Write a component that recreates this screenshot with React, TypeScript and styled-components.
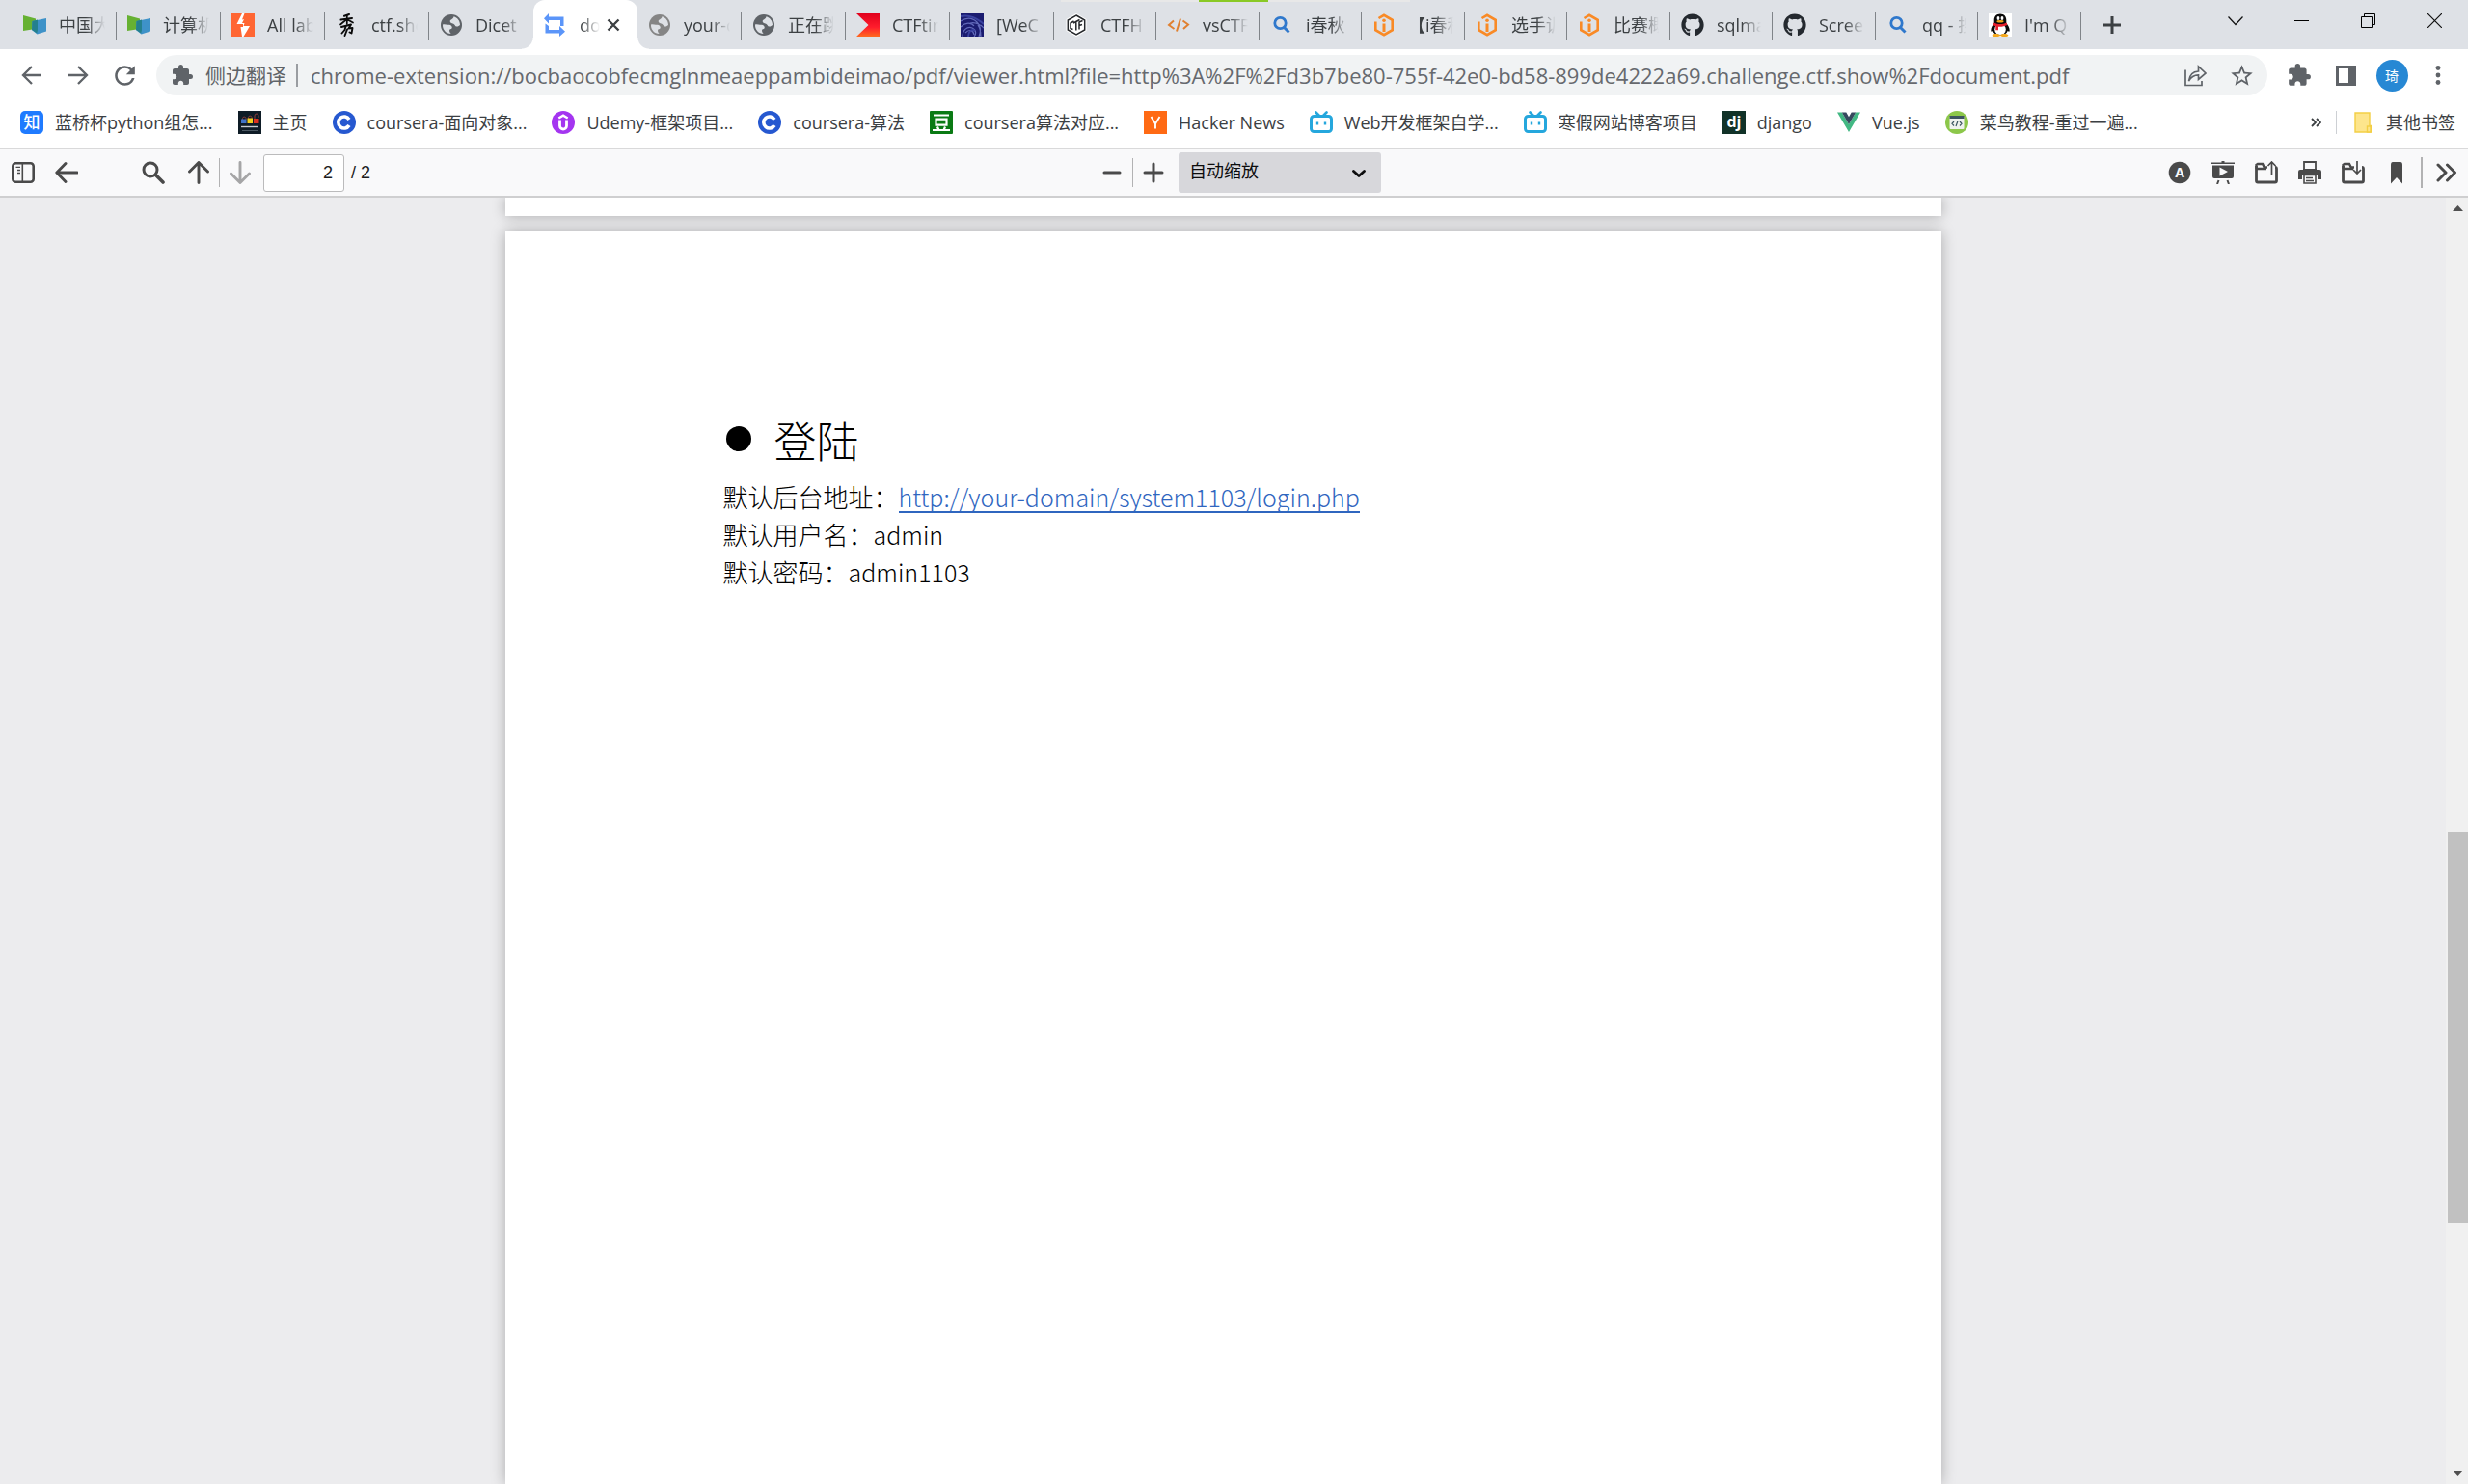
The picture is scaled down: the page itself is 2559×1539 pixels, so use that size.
import React from 'react';
import styled, { createGlobalStyle } from 'styled-components';
import { FaGithub } from 'react-icons/fa';
import { MdExtension, MdRefresh, MdStarBorder } from 'react-icons/md';

const color = {
  strip: '#dee1e6',
  field: '#f1f3f4',
  ink: '#3c4043',
  icon: '#5f6368',
  tool: '#4a4a4a',
  rule: '#9a9da1',
};

const uiFont = '"Open Sans", "Noto Sans CJK SC", sans-serif';
const docFont = '"Noto Sans CJK SC", sans-serif';

const GlobalStyle = createGlobalStyle`
  *, *::before, *::after { box-sizing: border-box; }
  body { margin: 0; background: #fff; font-family: ${uiFont}; color: ${color.ink}; }
  button, input, select { font: inherit; color: inherit; margin: 0; padding: 0; border: 0; background: none; }
  a { color: inherit; text-decoration: none; }
  svg { display: block; flex: none; }
`;

const Window = styled.div`
  display: flex;
  flex-direction: column;
  height: 100vh;
  overflow: hidden;
`;

/* ---------- tab strip ---------- */

const TabStrip = styled.header`
  position: relative;
  display: flex;
  height: 51px;
  flex: none;
  padding-left: 13px;
  background: ${color.strip};
`;

const TabList = styled.div`
  display: grid;
  grid-template-columns: repeat(10, 108px) repeat(5, 106px 107px);
`;

const TabButton = styled.div<{ $active?: boolean; $divider?: boolean }>`
  position: relative;
  display: flex;
  align-items: center;
  gap: 13px;
  padding: 0 12px 0 11px;
  min-width: 0;
  font-size: 18px;
  line-height: 24px;
  border-radius: 12px 12px 0 0;
  background: ${p => (p.$active ? '#fff' : 'transparent')};

  &::after {
    content: '';
    display: ${p => (p.$divider ? 'block' : 'none')};
    position: absolute;
    right: 0;
    top: 12px;
    width: 1px;
    height: 30px;
    background: #808489;
  }
`;

const Flare = styled.span<{ $side: 'left' | 'right' }>`
  position: absolute;
  bottom: 0;
  ${p => p.$side}: -12px;
  width: 12px;
  height: 12px;
  background: radial-gradient(
    circle at ${p => (p.$side === 'left' ? '0 0' : '100% 0')},
    transparent 11px,
    #fff 12px
  );
`;

const TabTitle = styled.button`
  flex: 1;
  min-width: 0;
  overflow: hidden;
  white-space: nowrap;
  text-align: left;
  mask-image: linear-gradient(to right, #000 calc(100% - 20px), transparent);
`;

const CloseButton = styled.button`
  display: flex;
  margin-right: 6px;
  margin-left: -6px;
`;

const NewTab = styled.button`
  display: grid;
  place-items: center;
  width: 64px;
  height: 51px;
`;

const WindowControls = styled.div`
  display: flex;
  margin-left: auto;
`;

const WindowButton = styled.button`
  display: grid;
  place-items: center;
  width: 69px;
  height: 43px;
`;

const TopHint = styled.div`
  position: absolute;
  top: 0;
  left: 43%;
  display: flex;
  justify-content: center;
  width: 362px;
  height: 2px;
  background: #e8e8e8;
`;

const TopHintMark = styled.span`
  width: 72px;
  margin-right: 4px;
  background: #8ac926;
`;

/* ---------- navigation ---------- */

const NavRow = styled.nav`
  display: flex;
  align-items: center;
  height: 54px;
  flex: none;
  padding: 0 7px 0 9px;
  color: ${color.icon};
`;

const NavButton = styled.button`
  display: grid;
  place-items: center;
  width: 48px;
  height: 42px;
`;

const AddressBar = styled.div`
  display: flex;
  align-items: center;
  flex: 1;
  height: 42px;
  margin: 0 9px;
  padding: 0 3px 0 15px;
  border-radius: 21px;
  background: ${color.field};
`;

const SiteLabel = styled.label`
  margin-left: 12px;
  padding-right: 10px;
  border-right: 2px solid ${color.rule};
  font-size: 21px;
  line-height: 24px;
`;

const AddressInput = styled.input`
  flex: 1;
  min-width: 0;
  height: 36px;
  padding-left: 13px;
  font-size: 22px;
  color: #66696e;
  outline: 0;
`;

const Avatar = styled.span`
  display: grid;
  place-items: center;
  width: 33px;
  height: 33px;
  border-radius: 50%;
  background: #2788d4;
  color: #fff;
  font-size: 14px;
`;

/* ---------- bookmarks ---------- */

const BookmarkBar = styled.nav`
  display: flex;
  align-items: center;
  height: 50px;
  flex: none;
  padding: 0 13px 4px 21px;
  border-bottom: 2px solid #d9d9da;
  font-size: 18px;
  line-height: 26px;
`;

const BookmarkList = styled.div`
  display: flex;
  flex: 1;
  gap: 26px;
`;

const Bookmark = styled.a`
  display: flex;
  align-items: center;
  gap: 12px;
  white-space: nowrap;
`;

const OverflowButton = styled.button`
  display: grid;
  place-items: center;
  width: 42px;
  height: 24px;
`;

const OtherBookmarks = styled(Bookmark)`
  padding-left: 18px;
  border-left: 1px solid #cdd0d4;
  line-height: 24px;
  gap: 15px;
`;

/* ---------- pdf toolbar ---------- */

const PdfToolbar = styled.div`
  display: grid;
  grid-template-columns: 1fr auto 1fr;
  align-items: center;
  height: 50px;
  flex: none;
  padding: 0 4px 0 9px;
  border-bottom: 2px solid #cfcfd0;
  background: #f9f9fa;
  color: ${color.tool};
  font: 18px/24px "Liberation Sans", "Noto Sans CJK SC", sans-serif;
`;

const ToolGroup = styled.div<{ $end?: boolean }>`
  display: flex;
  align-items: center;
  justify-content: ${p => (p.$end ? 'flex-end' : 'flex-start')};
`;

const ToolButton = styled.button<{ $w: number; $before?: number }>`
  display: grid;
  place-items: center;
  width: ${p => p.$w}px;
  height: 36px;
  margin-left: ${p => p.$before ?? 0}px;

  &:disabled { color: #a5a5a6; }
`;

const Rule = styled.span<{ $thick?: boolean }>`
  width: ${p => (p.$thick ? 2 : 1)}px;
  height: ${p => (p.$thick ? 32 : 30)}px;
  margin-left: ${p => (p.$thick ? 3 : 0)}px;
  background: #b2b2b3;
`;

const PageInput = styled.input`
  width: 84px;
  height: 39px;
  margin: 0 7px 0 3px;
  padding-right: 11px;
  border: 1px solid #bbbbbc;
  border-radius: 3px;
  background: #fff;
  color: #1c1c1d;
  text-align: right;
`;

const PageCount = styled.label`
  color: #1c1c1d;
`;

const SelectBox = styled.div`
  position: relative;
  margin-left: 5px;
`;

const ZoomSelect = styled.select`
  display: block;
  width: 210px;
  height: 42px;
  padding: 0 11px 3px;
  border-radius: 3px;
  background: #d7d7db;
  color: #0c0c0d;
  appearance: none;
`;

const SelectArrow = styled.svg`
  position: absolute;
  right: 16px;
  top: 18px;
  pointer-events: none;
`;

/* ---------- document ---------- */

const Viewer = styled.main`
  display: flex;
  flex: 1;
  min-height: 0;
  background: #ececee;
`;

const Pages = styled.div`
  display: flex;
  flex: 1;
  flex-direction: column;
  align-items: center;
  gap: 16px;
  overflow: hidden;
`;

const Sheet = styled.section<{ $tail?: boolean }>`
  width: min(1489px, 100%);
  flex: ${p => (p.$tail ? '0 0 19px' : '1')};
  padding: ${p => (p.$tail ? '0' : '183px 226px')};
  background: #fff;
  box-shadow: 0 0 14px rgba(0, 0, 0, 0.28);
  font-family: ${docFont};
  font-weight: 300;
  color: #000;
`;

const Heading = styled.h1`
  display: flex;
  align-items: center;
  gap: 24px;
  margin: 0 0 6px;
  padding-left: 3px;
  font-size: 44px;
  font-weight: 300;
  line-height: 66px;
`;

const Bullet = styled.span`
  width: 26px;
  height: 26px;
  margin-bottom: 2px;
  border-radius: 50%;
  background: #000;
`;

const Line = styled.p`
  display: flex;
  align-items: baseline;
  height: 39px;
  margin: 0;
  font-size: 26px;
  line-height: 39px;
`;

const Latin = styled.span`
  font-size: 25px;
`;

const DocLink = styled.a`
  border-bottom: 2px solid #2f66bf;
  color: #2f66bf;
  font-size: 25px;
  line-height: 29px;
`;

const ScrollTrack = styled.div`
  display: flex;
  flex-direction: column;
  align-items: flex-end;
  width: 23px;
  background: #f0f0f0;
`;

const ScrollButton = styled.button`
  display: grid;
  place-items: center;
  width: 21px;
  height: 22px;
  flex: none;
`;

const ScrollLane = styled.div`
  display: grid;
  grid-template-rows: 636fr 405fr 249fr;
  flex: 1;
  width: 21px;
`;

const ScrollThumb = styled.div`
  grid-row: 2;
  background: #c1c1c1;
`;

/* ---------- site icons ---------- */

const Icon = ({ children, size = 24 }: { children: React.ReactNode; size?: number }) => (
  <svg width={size} height={size} viewBox="0 0 24 24" fill="none" aria-hidden="true">
    {children}
  </svg>
);

const Mooc = () => (
  <Icon>
    <path d="M0 2 13 5.500V12L9.500 16.500 0 18z" fill="#66b132" />
    <path d="M24 5v13.500L14.500 21.500 9 17 9.500 8z" fill="#3e92c8" />
    <path d="M9.500 8 15 6.500V17l-.7 3.500L9 17z" fill="#24808d" />
  </Icon>
);

const Burp = () => (
  <Icon>
    <path fill="#ff6633" d="M0 0h24v24H0z" />
    <path fill="#fff" d="M12.500 0H11L5.500 11h6.500v3H9.500L11 24h1.500L19 13h-6.500l1-3H11l2-4-2 .5L13.500 0z" />
  </Icon>
);

const CtfShow = () => (
  <Icon>
    <g stroke="#0a0a0a" strokeLinecap="round" strokeLinejoin="round">
      <path strokeWidth="2" d="M9 2.800 14 1M5.500 6.500 17 5" />
      <path strokeWidth="1.700" d="M11.800 2v9M11 6.500 5 11.500M12.500 6.500l5.500 3" />
      <path strokeWidth="1.900" d="m6 14 10-2.500-2.500 4 4-.5-1 5.500-2-1M10.500 13.500 9.500 17 6.500 20.500M12 16.500 9.500 23" />
    </g>
  </Icon>
);

const Globe = ({ gray }: { gray?: boolean }) => (
  <Icon>
    <circle cx="12" cy="12" r="11" fill={gray ? '#858585' : '#5f6368'} />
    <g fill={color.strip}>
      <path d="M3 11.500c2-.6 3.500.2 5 .2 2.500 0 4 .3 4.600 2 .5 1.500-.3 2.300-1.600 2.600-1.600.4-1.200 2.700.6 4.700C6.500 21 2.700 16.800 3 11.500z" />
      <path d="M14.500 3.300c3.700 1 6.500 4.500 6.500 8.700-1 .8-2 1.700-3.500 1.600-1.800-.1-1.700-2.300-3.300-2.800-2-.5-3.900-1.300-3.500-3 .4-1.500 3.300-1.500 3.800-4.500z" />
    </g>
  </Icon>
);

const Translate = () => (
  <Icon>
    <g fill="#5b95f9">
      <path d="M5 0v3.500h15.500V13H17V7H5v3.500L0 5.200z" />
      <path d="M16 24v-3.500H1.500V10.500L5 13v4h11v-4l6 5.700z" />
    </g>
  </Icon>
);

const CtfTime = () => (
  <svg width="24" height="24" viewBox="0 0 24 24" aria-hidden="true">
    <defs>
      <linearGradient id="ctftime" x1="0" y1="0" x2="0" y2="1">
        <stop offset="0" stopColor="#e0001c" />
        <stop offset=".6" stopColor="#ff1d2c" />
        <stop offset="1" stopColor="#ff6a1f" />
      </linearGradient>
    </defs>
    <path d="M0 0h24v24H0l12.500-12z" fill="url(#ctftime)" />
  </svg>
);

const WeChall = () => (
  <Icon>
    <path fill="#1b1c70" d="M0 0h24v24H0z" />
    <g stroke="#6f78c8" strokeWidth="1.200" opacity=".85">
      <path d="M0 8c6-4 12-4 17 1s4 10 2 15M2 24c0-7 5-11 10-9s4 7 2 9M0 14c5-5 11-5 14-1M24 15c-5-5-9-6-14-5M5 20c4-4 8-3 9 2M18 12c2 3 3 7 3 12" />
    </g>
    <path stroke="#3a42a0" strokeWidth="2" d="M0 3c8-2 15 0 24 8M8 24c0-5 3-8 7-6" />
  </Icon>
);

const CtfHub = () => (
  <Icon>
    <path d="M12 1 21.500 6.500v11L12 23 2.500 17.500v-11z" fill="#fff" stroke="#fff" strokeWidth="2" />
    <path d="M12 2 20.700 7v10L12 22 3.300 17V7z" stroke="#26282c" strokeWidth="1.500" />
    <path
      d="M9.500 8 6 10v5.500l2.500 1M9 10l6.500-3.500M11.800 9v8.500M15 16.500V9l3.500-1.500M15 12.500l3-1"
      stroke="#26282c"
      strokeWidth="1.500"
    />
  </Icon>
);

const VsCtf = () => (
  <Icon>
    <path d="M7 7.500 2 12l5.500 4M16.500 7.500l5.500 4-5 4.500M14 5.500 10 18.500" stroke="#e08030" strokeWidth="2" />
  </Icon>
);

const Lens = () => (
  <Icon>
    <circle cx="10.500" cy="10" r="5.700" stroke="#2f78cc" strokeWidth="2.800" />
    <path d="m14.500 14.500 5 5" stroke="#2f78cc" strokeWidth="3" />
  </Icon>
);

const Ichunqiu = () => (
  <Icon>
    <g stroke="#f98a26" strokeWidth="2.600">
      <path d="M6.500 5 12 1.800l8.700 5v10.400L12 22.200l-8.700-5V8.500" />
      <path d="M12 10.500V19" strokeWidth="3" />
    </g>
    <circle cx="12" cy="7.300" r="1.800" fill="#f98a26" />
  </Icon>
);

const Penguin = () => (
  <Icon>
    <path fill="#fff" d="M0 0h24v24H0z" />
    <path
      fill="#0a0a0a"
      d="M12 .5c-4 0-6.300 2.800-6.300 6.500v3C4 12 2.300 15 2.300 17.500c0 1.500.8 1.500 2 .3.500 2.400 3 4.700 7.700 4.700s7.200-2.300 7.700-4.700c1.200 1.200 2 1.200 2-.3 0-2.500-1.700-5.500-3.400-7.500V7c0-3.700-2.300-6.500-6.300-6.500z"
    />
    <ellipse cx="12" cy="16.500" rx="5.800" ry="5.500" fill="#fff" />
    <ellipse cx="10" cy="5" rx="1.400" ry="2" fill="#fff" />
    <ellipse cx="14" cy="5" rx="1.400" ry="2" fill="#fff" />
    <ellipse cx="12" cy="8.300" rx="3.600" ry="1.200" fill="#f5a81c" />
    <path fill="#e5202b" d="M5.500 9.500c4 2 9 2 13 0l.8 2.500c-3 1.500-6 1.900-9.300 1.700v3.500H7.200l.2-4c-1-.3-2-.7-2.700-1.200z" />
    <path fill="#f5a81c" d="M4 22c1-1.500 6-1.500 7.500 0s-1 2-4 2-4.500-.5-3.500-2zM12.500 22c1-1.500 6.500-1.500 7.500 0s-.5 2-3.500 2-5-.5-4-2z" />
  </Icon>
);

const Zhihu = () => (
  <Icon>
    <rect width="24" height="24" rx="5" fill="#1f7bff" />
    <text x="12" y="18" textAnchor="middle" fontSize="17" fontWeight="500" fill="#fff" fontFamily="Noto Sans CJK SC">知</text>
  </Icon>
);

const Home = () => (
  <Icon>
    <path fill="#0e1c26" d="M0 0h24v24H0z" />
    <path d="M4.500 9V7.500a1.800 1.800 0 0 1 3.500 0V9M10.500 8V6.500a1.800 1.800 0 0 1 3.500 0V8M17 8V5a2 2 0 0 1 4 0v2" stroke="#8a3b3b" strokeWidth="1" />
    <path fill="#3f74c9" d="M3 8.500h5.500V13H3z" />
    <path fill="#f0cf1e" d="M9.500 7.500H15V13H9.500z" />
    <path fill="#dc3220" d="M16 8h5.500v5H16z" />
    <path stroke="#c8ced2" strokeWidth="1.400" d="M3 16.500h18" />
    <path stroke="#4a5862" d="M4 20.500h16" />
  </Icon>
);

const Coursera = () => (
  <Icon>
    <circle cx="12" cy="12" r="12" fill="#2658d0" />
    <path d="M17 9a6 6 0 1 0 0 6" stroke="#fff" strokeWidth="3.600" />
  </Icon>
);

const Udemy = () => (
  <Icon>
    <circle cx="12" cy="12" r="12" fill="#a435f0" />
    <path d="M8.500 9.500v6a3.500 3.500 0 0 0 7 0v-6" stroke="#fff" strokeWidth="2.800" />
    <path d="M7.300 7.500 12 4.700l4.700 2.800" stroke="#fff" strokeWidth="2.300" />
  </Icon>
);

const Douban = () => (
  <Icon>
    <rect width="24" height="24" rx="1" fill="#0a7a14" />
    <path d="M4 4.500h16M3 20h18M8 16.500l1.200 3M16 16.500l-1.200 3" stroke="#fff" strokeWidth="2.200" />
    <path d="M6.500 8.700h11v6h-11z" stroke="#fff" strokeWidth="2.200" />
  </Icon>
);

const HackerNews = () => (
  <Icon>
    <path fill="#ff6a14" d="M0 0h24v24H0z" />
    <path d="m7.500 6 4.500 7.500L16.500 6M12 13v5.500" stroke="#fff" strokeWidth="1.900" />
  </Icon>
);

const Bilibili = () => (
  <Icon>
    <rect x="1.500" y="5.500" width="21" height="16" rx="3" stroke="#25a7dd" strokeWidth="3" />
    <path d="m6.500 1.500 3.500 3.500M17.500 1.500 14 5" stroke="#25a7dd" strokeWidth="2.600" strokeLinecap="round" />
    <path d="M8 11.500v3M16 11.500v3" stroke="#25a7dd" strokeWidth="2.400" />
  </Icon>
);

const Django = () => (
  <Icon>
    <path fill="#113228" d="M0 0h24v24H0z" />
    <text x="12" y="16.500" textAnchor="middle" fontSize="16" fontWeight="700" fill="#fff" fontFamily="Open Sans">dj</text>
  </Icon>
);

const Vue = () => (
  <Icon>
    <path fill="#42b883" d="M0 1.500h4.800L12 14l7.200-12.500H24L12 22z" />
    <path fill="#35495e" d="M4.800 1.500h4.500L12 6.200l2.700-4.700h4.500L12 14z" />
  </Icon>
);

const Runoob = () => (
  <Icon>
    <circle cx="12" cy="12" r="12" fill="#8cc74a" />
    <rect x="4.500" y="5.500" width="15" height="13.500" rx="1" fill="#eef1ee" />
    <path fill="#3c5560" d="M4.500 5h15v3h-15z" />
    <path d="m9 11-2 2.300L9 15.500M15 11l2 2.300-2 2.200M13 10.500l-2 5.500" stroke="#3c5560" strokeWidth="1.200" />
  </Icon>
);

const Folder = () => (
  <svg width="18" height="22" viewBox="0 0 18 22" aria-hidden="true">
    <path d="M1 1h15v13.500h1.300V21H1z" fill="#fde58c" stroke="#f3cf45" strokeWidth="1.400" />
    <path d="M13.500 21v-6h3.500v6z" fill="#fde58c" stroke="#f3cf45" strokeWidth="1.400" />
  </svg>
);

/* ---------- chrome icons ---------- */

const BackIcon = () => (
  <Icon>
    <path d="M22 12H4M12 3l-9 9 9 9" stroke="currentColor" strokeWidth="2.300" />
  </Icon>
);

const ForwardIcon = () => (
  <Icon>
    <path d="M2 12h18M12 3l9 9-9 9" stroke="currentColor" strokeWidth="2.300" />
  </Icon>
);

const ShareIcon = () => (
  <Icon>
    <path d="M2 6.500V22.500h17V18" stroke="currentColor" strokeWidth="1.700" />
    <path d="M5.500 18c.8-6.500 4.500-9.700 10-10V3l7.500 7-7.500 6.500v-4.700c-4.800 0-7.800 2-10 6.200z" stroke="currentColor" strokeWidth="1.700" />
  </Icon>
);

const SidePanelIcon = () => (
  <svg width="21" height="21" viewBox="0 0 21 21" aria-hidden="true">
    <path fillRule="evenodd" fill="currentColor" d="M0 0h21v21H0zM3 3v15h10V3z" />
  </svg>
);

const DotsIcon = () => (
  <Icon>
    <g fill="currentColor">
      <circle cx="12" cy="4.500" r="2.400" />
      <circle cx="12" cy="12" r="2.400" />
      <circle cx="12" cy="19.500" r="2.400" />
    </g>
  </Icon>
);

/* ---------- pdf icons ---------- */

const SidebarIcon = () => (
  <Icon>
    <rect x="1.300" y="2.300" width="21.400" height="19.400" rx="3" stroke="currentColor" strokeWidth="2.600" />
    <path d="M11.300 2v20" stroke="currentColor" strokeWidth="1.600" />
    <path d="M4.500 6.300H9M6 9.500h3M6 12.500h3" stroke="currentColor" strokeWidth="1.300" />
  </Icon>
);

const PdfBackIcon = () => (
  <Icon>
    <path d="M23 12H2.500M11 2.500 1.800 12l9.200 9.500" stroke="currentColor" strokeWidth="2.900" strokeLinecap="round" strokeLinejoin="round" />
  </Icon>
);

const FindIcon = () => (
  <Icon>
    <circle cx="9" cy="9" r="7" stroke="currentColor" strokeWidth="3" />
    <path d="m14.500 14.500 7.500 7.500" stroke="currentColor" strokeWidth="3.600" strokeLinecap="round" />
  </Icon>
);

const UpIcon = () => (
  <Icon>
    <path d="M12 22.500V2M2.500 11 12 1.500l9.500 9.500" stroke="currentColor" strokeWidth="2.900" strokeLinecap="round" strokeLinejoin="round" />
  </Icon>
);

const DownIcon = () => (
  <Icon>
    <path d="M12 1.500V22M2.500 13l9.500 9.500 9.500-9.500" stroke="currentColor" strokeWidth="2.900" strokeLinecap="round" strokeLinejoin="round" />
  </Icon>
);

const MinusIcon = () => (
  <Icon>
    <path d="M4 12h16" stroke="currentColor" strokeWidth="3" strokeLinecap="round" />
  </Icon>
);

const PlusIcon = () => (
  <Icon>
    <path d="M3 12h18M12 3v18" stroke="currentColor" strokeWidth="3" strokeLinecap="round" />
  </Icon>
);

const LetterIcon = () => (
  <Icon>
    <circle cx="12" cy="12" r="11.300" fill="currentColor" />
    <text x="12" y="17" textAnchor="middle" fontSize="14" fontWeight="700" fill="#f9f9fa" fontFamily="Open Sans">A</text>
  </Icon>
);

const PresentIcon = () => (
  <Icon>
    <path fill="currentColor" d="M0 1.500h10.500V0h3v1.500H24V3H0zM1 4.500h22V16q0 2-2 2H3q-2 0-2-2z" />
    <path fill="#f9f9fa" d="M8.500 6.500v9L17 11z" />
    <path d="m7.500 20-1.500 4M16.500 20l1.500 4" stroke="currentColor" strokeWidth="2" />
  </Icon>
);

const FolderOutline = () => (
  <>
    <path d="M1.500 8V4L3 3h5l1.800 3.500H13M1.500 8H12" stroke="currentColor" strokeWidth="2.400" />
    <path d="M1.500 5v15.500q0 1.500 1.500 1.500h18q1.500 0 1.500-1.500V8q0-1.500-1.500-1.500" stroke="currentColor" strokeWidth="2.800" />
  </>
);

const OpenIcon = () => (
  <Icon>
    <FolderOutline />
    <path d="M17.500 14V1.500M13.500 5l4-4 4 4" stroke="currentColor" strokeWidth="1.700" />
  </Icon>
);

const PrintIcon = () => (
  <Icon>
    <path d="M6 10V1h12v9" stroke="currentColor" strokeWidth="1.800" />
    <path fill="currentColor" d="M5 8h14v1h3q2 0 2 2v8h-4v-4H4v4H0v-8q0-2 2-2h3z" />
    <path d="M6 14.500h12V23H6zM8 17.500h7M8 20.500h8" stroke="currentColor" strokeWidth="1.600" />
  </Icon>
);

const SaveIcon = () => (
  <Icon>
    <FolderOutline />
    <path d="M16 0v13M12 9l4 4 4-4" stroke="currentColor" strokeWidth="1.700" />
  </Icon>
);

const BookmarkIcon = () => (
  <Icon>
    <path fill="currentColor" d="M6 4q0-3 2-3h8q2 0 2 3v19.500L12 17l-6 6.500z" />
  </Icon>
);

const MoreIcon = () => (
  <Icon>
    <path d="m3 4 8 8-8 8M12.500 4l8 8-8 8" stroke="currentColor" strokeWidth="3" strokeLinecap="round" strokeLinejoin="round" />
  </Icon>
);

/* ---------- data ---------- */

const tabs: { title: string; icon: React.ReactNode; active?: boolean }[] = [
  { title: '中国大', icon: <Mooc /> },
  { title: '计算机', icon: <Mooc /> },
  { title: 'All lab', icon: <Burp /> },
  { title: 'ctf.sho', icon: <CtfShow /> },
  { title: 'Dicet', icon: <Globe /> },
  { title: 'doc', icon: <Translate />, active: true },
  { title: 'your-d', icon: <Globe gray /> },
  { title: '正在跳', icon: <Globe /> },
  { title: 'CTFtim', icon: <CtfTime /> },
  { title: '[WeC', icon: <WeChall /> },
  { title: 'CTFH', icon: <CtfHub /> },
  { title: 'vsCTF', icon: <VsCtf /> },
  { title: 'i春秋', icon: <Lens /> },
  { title: '【i春秋', icon: <Ichunqiu /> },
  { title: '选手训', icon: <Ichunqiu /> },
  { title: '比赛概', icon: <Ichunqiu /> },
  { title: 'sqlma', icon: <FaGithub size={24} color="#24292f" /> },
  { title: 'Scree', icon: <FaGithub size={24} color="#24292f" /> },
  { title: 'qq - 搜', icon: <Lens /> },
  { title: "I'm Q", icon: <Penguin /> },
];

const bookmarks: [string, React.ReactNode][] = [
  ['蓝桥杯python组怎...', <Zhihu />],
  ['主页', <Home />],
  ['coursera-面向对象...', <Coursera />],
  ['Udemy-框架项目...', <Udemy />],
  ['coursera-算法', <Coursera />],
  ['coursera算法对应...', <Douban />],
  ['Hacker News', <HackerNews />],
  ['Web开发框架自学...', <Bilibili />],
  ['寒假网站博客项目', <Bilibili />],
  ['django', <Django />],
  ['Vue.js', <Vue />],
  ['菜鸟教程-重过一遍...', <Runoob />],
];

const actions: [string, React.ReactNode][] = [
  ['编辑文本', <LetterIcon />],
  ['演示模式', <PresentIcon />],
  ['打开', <OpenIcon />],
  ['打印', <PrintIcon />],
  ['保存', <SaveIcon />],
  ['当前视图', <BookmarkIcon />],
];

const address =
  'chrome-extension://bocbaocobfecmglnmeaeppambideimao/pdf/viewer.html?file=http%3A%2F%2Fd3b7be80-755f-42e0-bd58-899de4222a69.challenge.ctf.show%2Fdocument.pdf';

export default function App() {
  return (
    <Window>
      <GlobalStyle />
      <TabStrip>
        <TabList>
          {tabs.map((tab, i) => (
            <TabButton key={i} $active={tab.active} $divider={!tab.active && !tabs[i + 1]?.active}>
              {tab.active && <Flare $side="left" />}
              {tab.active && <Flare $side="right" />}
              {tab.icon}
              <TabTitle>{tab.title}</TabTitle>
              {tab.active && (
                <CloseButton aria-label="关闭标签页">
                  <svg width="14" height="14" viewBox="0 0 14 14" stroke={color.ink} strokeWidth="2.400">
                    <path d="m1.500 1.500 11 11M12.500 1.500l-11 11" />
                  </svg>
                </CloseButton>
              )}
            </TabButton>
          ))}
        </TabList>
        <NewTab aria-label="新标签页">
          <svg width="18" height="18" viewBox="0 0 18 18" stroke={color.ink} strokeWidth="3">
            <path d="M0 9h18M9 0v18" />
          </svg>
        </NewTab>
        <WindowControls>
          <WindowButton aria-label="搜索标签页">
            <svg width="16" height="10" viewBox="0 0 16 10" fill="none" stroke="#111" strokeWidth="1.200">
              <path d="m.5.5 7.500 8 7.500-8" />
            </svg>
          </WindowButton>
          <WindowButton aria-label="最小化">
            <svg width="15" height="15" viewBox="0 0 15 15" stroke="#000">
              <path d="M0 7.500h15" />
            </svg>
          </WindowButton>
          <WindowButton aria-label="还原">
            <svg width="15" height="15" viewBox="0 0 15 15" fill="none" stroke="#000">
              <path d="M.5 3.500h11v11H.5zM3.500 3.500v-3h11v11h-3" />
            </svg>
          </WindowButton>
          <WindowButton aria-label="关闭">
            <svg width="15" height="15" viewBox="0 0 15 15" stroke="#111" strokeWidth="1.200">
              <path d="m0 0 15 15M15 0 0 15" />
            </svg>
          </WindowButton>
        </WindowControls>
        <TopHint>
          <TopHintMark />
        </TopHint>
      </TabStrip>

      <NavRow>
        <NavButton aria-label="后退"><BackIcon /></NavButton>
        <NavButton aria-label="前进"><ForwardIcon /></NavButton>
        <NavButton aria-label="重新加载"><MdRefresh size={31} /></NavButton>
        <AddressBar>
          <MdExtension size={24} />
          <SiteLabel htmlFor="address">侧边翻译</SiteLabel>
          <AddressInput id="address" defaultValue={address} spellCheck={false} />
          <NavButton aria-label="分享"><ShareIcon /></NavButton>
          <NavButton aria-label="收藏"><MdStarBorder size={27} /></NavButton>
        </AddressBar>
        <NavButton aria-label="扩展程序"><MdExtension size={26} /></NavButton>
        <NavButton aria-label="侧边栏"><SidePanelIcon /></NavButton>
        <NavButton aria-label="个人资料"><Avatar>琦</Avatar></NavButton>
        <NavButton aria-label="菜单"><DotsIcon /></NavButton>
      </NavRow>

      <BookmarkBar>
        <BookmarkList>
          {bookmarks.map(([name, icon], i) => (
            <Bookmark key={i} href="#">
              {icon}
              {name}
            </Bookmark>
          ))}
        </BookmarkList>
        <OverflowButton aria-label="更多书签">
          <svg width="11" height="10" viewBox="0 0 11 10" fill="none" stroke={color.ink} strokeWidth="1.800">
            <path d="m1 1 4 4-4 4M6 1l4 4-4 4" />
          </svg>
        </OverflowButton>
        <OtherBookmarks href="#">
          <Folder />
          其他书签
        </OtherBookmarks>
      </BookmarkBar>

      <PdfToolbar>
        <ToolGroup>
          <ToolButton $w={30} aria-label="侧栏"><SidebarIcon /></ToolButton>
          <ToolButton $w={30} $before={15} aria-label="返回"><PdfBackIcon /></ToolButton>
          <ToolButton $w={30} $before={60} aria-label="查找"><FindIcon /></ToolButton>
          <ToolButton $w={42} $before={11} aria-label="上一页"><UpIcon /></ToolButton>
          <Rule />
          <ToolButton $w={42} disabled aria-label="下一页"><DownIcon /></ToolButton>
          <PageInput id="page" defaultValue="2" />
          <PageCount htmlFor="page">/ 2</PageCount>
        </ToolGroup>
        <ToolGroup>
          <ToolButton $w={42} aria-label="缩小"><MinusIcon /></ToolButton>
          <Rule />
          <ToolButton $w={42} aria-label="放大"><PlusIcon /></ToolButton>
          <SelectBox>
            <ZoomSelect aria-label="缩放" defaultValue="auto">
              <option value="auto">自动缩放</option>
            </ZoomSelect>
            <SelectArrow width="14" height="9" viewBox="0 0 14 9" fill="none" stroke="#0c0c0d" strokeWidth="2.800">
              <path d="m1.500 1.500 5.500 5 5.500-5" strokeLinecap="round" strokeLinejoin="round" />
            </SelectArrow>
          </SelectBox>
        </ToolGroup>
        <ToolGroup $end>
          {actions.map(([name, icon]) => (
            <ToolButton key={name} $w={45} aria-label={name}>{icon}</ToolButton>
          ))}
          <Rule $thick />
          <ToolButton $w={36} $before={7} aria-label="工具"><MoreIcon /></ToolButton>
        </ToolGroup>
      </PdfToolbar>

      <Viewer>
        <Pages>
          <Sheet $tail />
          <Sheet>
            <Heading>
              <Bullet />
              登陆
            </Heading>
            <Line>
              默认后台地址：
              <DocLink href="http://your-domain/system1103/login.php">http://your-domain/system1103/login.php</DocLink>
            </Line>
            <Line>
              默认用户名：<Latin>admin</Latin>
            </Line>
            <Line>
              默认密码：<Latin>admin1103</Latin>
            </Line>
          </Sheet>
        </Pages>
        <ScrollTrack>
          <ScrollButton aria-label="向上滚动">
            <svg width="11" height="6" viewBox="0 0 11 6"><path d="M0 6 5.500 0 11 6z" fill="#505050" /></svg>
          </ScrollButton>
          <ScrollLane>
            <ScrollThumb />
          </ScrollLane>
          <ScrollButton aria-label="向下滚动">
            <svg width="11" height="6" viewBox="0 0 11 6"><path d="M0 0h11L5.500 6z" fill="#505050" /></svg>
          </ScrollButton>
        </ScrollTrack>
      </Viewer>
    </Window>
  );
}
